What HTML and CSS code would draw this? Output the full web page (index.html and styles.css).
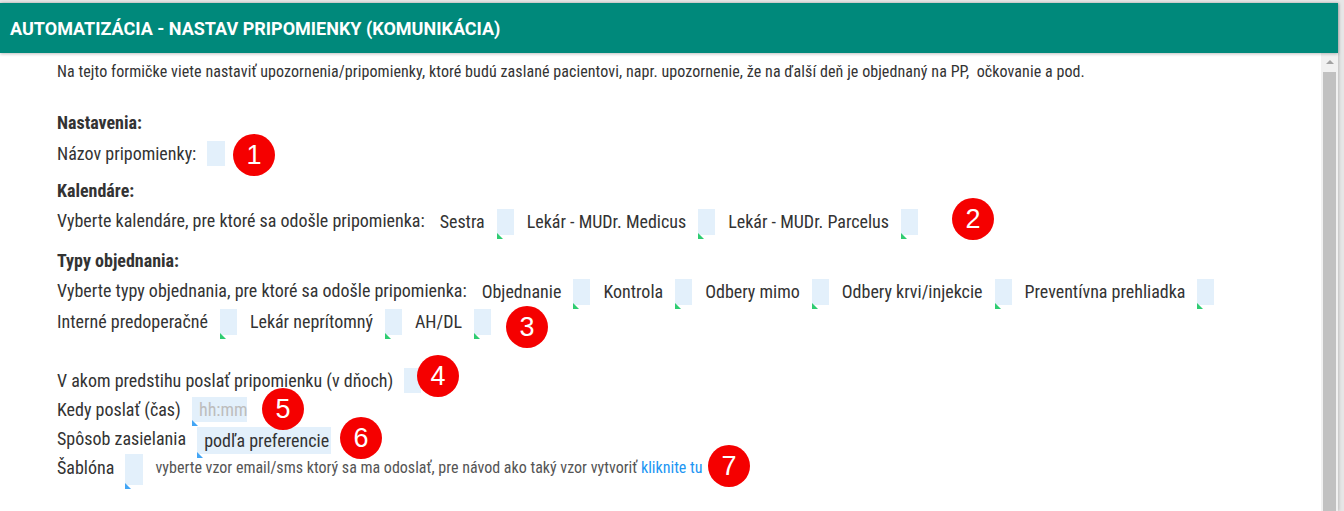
FILE: index.html
```html
<!DOCTYPE html>
<html lang="sk">
<head>
<meta charset="utf-8">
<title>Automatizácia - nastav pripomienky</title>
<link rel="stylesheet" href="styles.css">
</head>
<body>
<div class="window">
  <header class="header">AUTOMATIZÁCIA - NASTAV PRIPOMIENKY (KOMUNIKÁCIA)</header>
  <div class="main">
    <div class="content">
      <p class="intro">Na tejto formičke viete nastaviť upozornenia/pripomienky, ktoré budú zaslané pacientovi, napr. upozornenie, že na ďalší deň je objednaný na PP,&nbsp; očkovanie a pod.</p>

      <div class="heading h-nast">Nastavenia:</div>
      <div class="row">Názov pripomienky: <span class="field f-name"></span></div>

      <div class="heading h-kal">Kalendáre:</div>
      <div class="opts">
        <span class="q">Vyberte kalendáre, pre ktoré sa odošle pripomienka:</span>
        <span class="opt">Sestra<span class="check"></span></span>
        <span class="opt">Lekár - MUDr. Medicus<span class="check"></span></span>
        <span class="opt">Lekár - MUDr. Parcelus<span class="check"></span></span>
      </div>

      <div class="heading h-typy">Typy objednania:</div>
      <div class="opts">
        <span class="q">Vyberte typy objednania, pre ktoré sa odošle pripomienka:</span>
        <span class="opt">Objednanie<span class="check"></span></span>
        <span class="opt">Kontrola<span class="check"></span></span>
        <span class="opt">Odbery mimo<span class="check"></span></span>
        <span class="opt">Odbery krvi/injekcie<span class="check"></span></span>
        <span class="opt">Preventívna prehliadka<span class="check"></span></span>
        <span class="opt">Interné predoperačné<span class="check"></span></span>
        <span class="opt">Lekár neprítomný<span class="check"></span></span>
        <span class="opt">AH/DL<span class="check"></span></span>
      </div>

      <div class="row r-first">V akom predstihu poslať pripomienku (v dňoch) <span class="field f-days"></span></div>
      <div class="row r-tight">Kedy poslať (čas) <span class="field f-time blue"><span class="ph">hh:mm</span></span></div>
      <div class="row r-tight">Spôsob zasielania <span class="field f-sel blue">podľa preferencie</span></div>
      <div class="row r-tight">Šablóna <span class="field f-tpl blue"></span><span class="help">vyberte vzor email/sms ktorý sa ma odoslať, pre návod ako taký vzor vytvoriť <a href="#" class="link">kliknite tu</a></span></div>
    </div>
    <div class="scrollbar"><span class="arrow"></span><span class="thumb"></span></div>
  </div>

  <span class="badge b1">1</span>
  <span class="badge b2">2</span>
  <span class="badge b3">3</span>
  <span class="badge b4">4</span>
  <span class="badge b5">5</span>
  <span class="badge b6">6</span>
  <span class="badge b7">7</span>
</div>
</body>
</html>
```
FILE: styles.css
```css
html, body {
  margin: 0;
  padding: 0;
  height: 100%;
  overflow: hidden;
}
body {
  background: #e6e6e6;
  font-family: Roboto, "Liberation Sans", sans-serif;
  color: #333;
}
.window {
  position: relative;
  margin-top: 3px;
  width: 1338px;
  height: 508px;
  background: #fff;
  box-shadow: 1px 0 3px rgba(0,0,0,0.18);
  display: flex;
  flex-direction: column;
}
.header {
  height: 50px;
  flex: none;
  background: #00897b;
  color: #fff;
  font-weight: bold;
  font-size: 18px;
  display: flex;
  align-items: center;
  padding-left: 10px;
  box-shadow: 0 1px 3px rgba(0,0,0,0.25);
  position: relative;
  z-index: 1;
}
.main {
  flex: 1;
  display: flex;
  min-height: 0;
}
.content {
  flex: 1;
  padding-left: 57px;
  padding-top: 4px;
  font-size: 18px;
  font-stretch: 87.5%;
}
.intro {
  margin: 0;
  line-height: 30px;
  font-size: 16px;
  letter-spacing: 0.075px;
}
.heading {
  font-weight: bold;
  line-height: 30px;
}
.h-nast { margin-top: 21px; }
.h-kal { margin-top: 8px; }
.h-typy { margin-top: 10px; }
.row {
  display: flex;
  align-items: center;
  height: 30px;
  white-space: pre;
}
.r-first { margin-top: 29px; }
.r-tight { height: 29px; }
.opts {
  display: flex;
  flex-wrap: wrap;
  align-items: center;
  padding-right: 80px;
}
.q {
  height: 30px;
  line-height: 30px;
  margin-right: 15px;
}
.opt {
  display: flex;
  align-items: center;
  height: 30px;
  margin-right: 13px;
}
.check, .field {
  position: relative;
  display: inline-block;
  background: #e3f0fb;
}
.check {
  width: 17px;
  height: 26px;
  margin-left: 12px;
  margin-top: 2px;
}
.check::after, .field.blue::after {
  content: "";
  position: absolute;
  left: 0;
  bottom: -4px;
  width: 0;
  height: 0;
  border-left: 6px solid #2ecc71;
  border-top: 6px solid transparent;
}
.field.blue::after {
  border-left-color: #42a5f5;
}
.f-name { width: 18px; height: 25px; margin-left: 7px; }
.f-days { width: 17px; height: 25px; margin-left: 7px; }
.f-time { width: 55px; height: 25px; margin-left: 7px; padding-left: 7px; box-sizing: border-box; line-height: 25px; }
.ph { color: #bdbdbd; }
.f-sel { height: 27px; margin-left: 7px; padding: 0 2px 0 7px; line-height: 27px; color: #333; margin-top: 3px; }
.f-tpl { width: 18px; height: 31px; margin-left: 7px; margin-top: 4px; }
.help {
  margin-left: 12px;
  font-size: 16px;
  color: #555;
}
.link {
  color: #2196f3;
  text-decoration: none;
}
.scrollbar {
  width: 17px;
  flex: none;
  background: #f1f1f1;
  display: flex;
  flex-direction: column;
  align-items: center;
}
.arrow {
  margin-top: 7px;
  width: 0;
  height: 0;
  border-left: 4px solid transparent;
  border-right: 4px solid transparent;
  border-bottom: 4px solid #a3a3a3;
}
.thumb {
  margin-top: 8px;
  width: 13px;
  flex: 1;
  background: #c1c1c1;
}
.badge {
  position: absolute;
  width: 42px;
  height: 42px;
  border-radius: 50%;
  background: #f50000;
  color: #fff;
  font-family: "Liberation Sans", Arial, sans-serif;
  font-size: 27px;
  line-height: 42px;
  text-align: center;
  z-index: 2;
}
.b1 { left: 233px; top: 131px; }
.b2 { left: 952px; top: 195px; }
.b3 { left: 506px; top: 303px; }
.b4 { left: 417px; top: 352px; }
.b5 { left: 262px; top: 385px; }
.b6 { left: 340px; top: 414px; }
.b7 { left: 708px; top: 442px; }
```
